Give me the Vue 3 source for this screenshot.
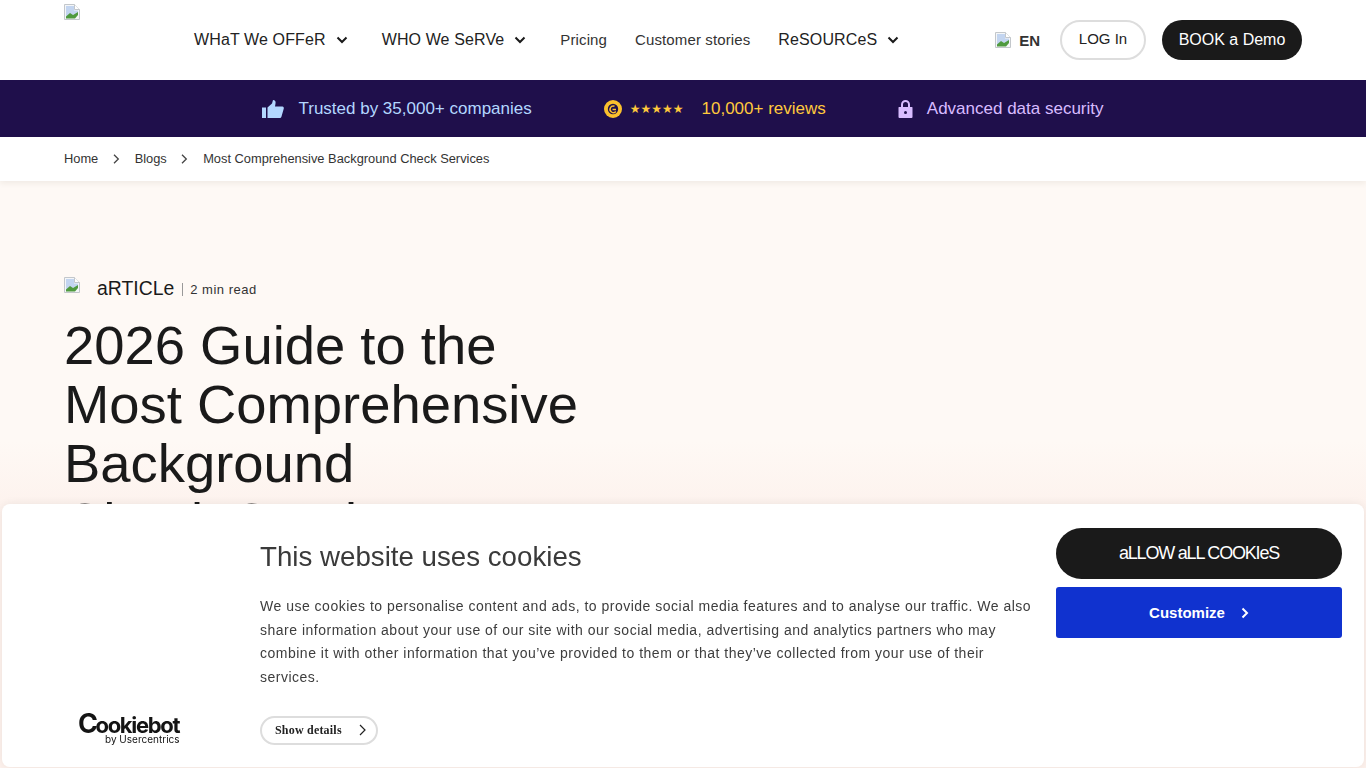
<script setup>
const navItems = [
  { label: 'WHaT We OFFeR', display: true, caret: true },
  { label: 'WHO We SeRVe', display: true, caret: true },
  { label: 'Pricing', display: false, caret: false },
  { label: 'Customer stories', display: false, caret: false },
  { label: 'ReSOURCeS', display: true, caret: true },
]
const crumbs = ['Home', 'Blogs']
</script>

<template>
  <div class="page">
    <header class="topbar">
      <div class="logo">
        <svg class="broken" viewBox="0 0 16 16"><path d="M.5.5h10L15.500 5.500v10H.5z" fill="#f4f6f8" stroke="#c3c7cb"/><path d="M10.500.5v5h5" fill="#fff" stroke="#c3c7cb"/><path d="M2 2h8v4.500h4V9l-5 2-2 3H2z" fill="#c3d5f0"/><path d="M2 14.500v-2L6 9l3 2 5-3v3l-3 3.500z" fill="#4f9a3f"/></svg>
      </div>
      <nav class="nav">
        <a v-for="item in navItems" :key="item.label" class="nav-item" :class="{ display: item.display }">
          <span>{{ item.label }}</span>
          <svg v-if="item.caret" class="caret" viewBox="0 0 12 8"><path d="M1.500 1.500 6 6l4.500-4.500" fill="none" stroke="#1a1a1a" stroke-width="2"/></svg>
        </a>
      </nav>
      <div class="actions">
        <div class="lang">
          <svg class="broken" viewBox="0 0 16 16"><path d="M.5.5h10L15.500 5.500v10H.5z" fill="#f4f6f8" stroke="#c3c7cb"/><path d="M10.500.5v5h5" fill="#fff" stroke="#c3c7cb"/><path d="M2 2h8v4.500h4V9l-5 2-2 3H2z" fill="#c3d5f0"/><path d="M2 14.500v-2L6 9l3 2 5-3v3l-3 3.500z" fill="#4f9a3f"/></svg>
          <span>EN</span>
        </div>
        <a class="btn-login">LOG In</a>
        <a class="btn-demo">BOOK a Demo</a>
      </div>
    </header>

    <section class="trust">
      <div class="trust-item blue">
        <svg class="thumb" viewBox="0 0 22 18"><path d="M0 7.500h4V18H0zM5.500 7.500 10 3.500 11 0c2 0 3 1.500 2.500 3.500L13 6.500h7.500c1 0 1.500 1 1.300 2l-2.300 8c-.3 1-1 1.500-2 1.500H5.500z" fill="#b3d7ff"/></svg>
        <span>Trusted by 35,000+ companies</span>
      </div>
      <div class="trust-item yellow">
        <svg class="g2" viewBox="0 0 18 18"><circle cx="9" cy="9" r="9" fill="#fbc02d"/><circle cx="9" cy="9" r="5.200" fill="#1f0f4b"/><path d="M11.800 11.500A3.300 3.300 0 1 1 10.500 6.200" fill="none" stroke="#fbc02d" stroke-width="1.500"/><path d="M8.500 9.500h3.500" stroke="#fbc02d" stroke-width="1.500"/></svg>
        <span class="stars">★★★★★</span>
        <span>10,000+ reviews</span>
      </div>
      <div class="trust-item purple">
        <svg class="lock" viewBox="0 0 14 18"><path d="M3.500 7V4.500a3.500 3.500 0 0 1 7 0V7" fill="none" stroke="#d8bcff" stroke-width="2"/><path d="M.5 7h13a.5.5 0 0 1 .5.5V17a1 1 0 0 1-1 1H1a1 1 0 0 1-1-1V7.500A.5.5 0 0 1 .5 7z" fill="#d8bcff"/><circle cx="7" cy="12.500" r="1.500" fill="#1f0f4b"/></svg>
        <span>Advanced data security</span>
      </div>
    </section>

    <div class="crumbs">
      <template v-for="c in crumbs" :key="c">
        <span>{{ c }}</span>
        <svg class="crumb-sep" viewBox="0 0 7 10"><path d="M1 .8 5.300 5 1 9.200" fill="none" stroke="#444" stroke-width="1.300"/></svg>
      </template>
      <span>Most Comprehensive Background Check Services</span>
    </div>

    <main class="hero">
      <div class="meta">
        <svg class="broken" viewBox="0 0 16 16"><path d="M.5.5h10L15.500 5.500v10H.5z" fill="#f4f6f8" stroke="#c3c7cb"/><path d="M10.500.5v5h5" fill="#fff" stroke="#c3c7cb"/><path d="M2 2h8v4.500h4V9l-5 2-2 3H2z" fill="#c3d5f0"/><path d="M2 14.500v-2L6 9l3 2 5-3v3l-3 3.500z" fill="#4f9a3f"/></svg>
        <span class="kind">aRTICLe</span>
        <span class="read">2 min read</span>
      </div>
      <h1>2026 Guide to the<br>Most Comprehensive<br>Background<br>Check Services</h1>
    </main>

    <aside class="cookie">
      <div class="brand">
        <div class="cb-word"><span class="cb-c">C</span>ookiebot</div>
        <div class="cb-sub">by Usercentrics</div>
      </div>
      <div class="cookie-body">
        <h2>This website uses cookies</h2>
        <p>We use cookies to personalise content and ads, to provide social media features and to analyse our traffic. We also share information about your use of our site with our social media, advertising and analytics partners who may combine it with other information that you’ve provided to them or that they’ve collected from your use of their services.</p>
        <button class="details">
          <span>Show details</span>
          <svg viewBox="0 0 7 12"><path d="M1 1l5 5-5 5" fill="none" stroke="#222" stroke-width="1.200"/></svg>
        </button>
      </div>
      <div class="cookie-actions">
        <button class="allow">aLLOW aLL COOKIeS</button>
        <button class="customize">
          <span>Customize</span>
          <svg viewBox="0 0 8 12"><path d="M1.500 1.500 6 6l-4.500 4.500" fill="none" stroke="#fff" stroke-width="2"/></svg>
        </button>
      </div>
    </aside>
  </div>
</template>

<style>
html, body { margin: 0; background: #fff; overflow: hidden; }
</style>

<style scoped>
.page { height: 768px; overflow: hidden; font-family: "Liberation Sans", Arial, sans-serif; color: #1a1a1a; }
.broken { width: 16px; height: 16px; flex: none; display: block; }

.topbar { height: 80px; background: #fff; display: flex; padding: 0 64px; box-sizing: border-box; }
.logo { width: 130px; flex: none; padding-top: 4px; }
.nav { display: flex; align-items: center; gap: 28px; flex: 1; }
.nav-item { display: flex; align-items: center; gap: 10px; font-size: 15px; letter-spacing: .12px; color: #333; white-space: nowrap; padding-bottom: 1px; }
.nav-item.display { font-size: 16px; letter-spacing: .12px; color: #222; }
.caret { width: 12px; height: 8px; margin-right: 6px; margin-top: 1px; }
.actions { display: flex; align-items: center; }
.lang { display: flex; align-items: center; gap: 8px; font-weight: 700; font-size: 15px; color: #333; margin-right: 20px; }
.btn-login { width: 86px; height: 40px; box-sizing: border-box; border: 2px solid #ddd; border-radius: 20px; display: flex; align-items: center; justify-content: center; font-size: 15px; color: #222; margin-right: 16px; padding-bottom: 3px; }
.btn-demo { width: 140px; height: 40px; box-sizing: border-box; background: #1a1a1a; border-radius: 20px; color: #fff; display: flex; align-items: center; justify-content: center; font-size: 16px; padding-bottom: 1px; }

.trust { height: 57px; background: #1f0f4b; display: flex; align-items: center; justify-content: center; gap: 72px; font-size: 17px; }
.trust-item { display: flex; align-items: center; white-space: nowrap; }
.blue { color: #b3d7ff; }
.yellow { color: #ffc93c; }
.purple { color: #d8bcff; }
.thumb { width: 22px; height: 18px; margin-right: 14px; }
.g2 { width: 18px; height: 18px; margin-right: 8px; }
.stars { font-size: 12px; margin-right: 18px; font-family: "DejaVu Sans", sans-serif; }
.lock { width: 15px; height: 18px; margin-right: 14px; }

.crumbs { height: 44px; background: #fff; display: flex; align-items: center; padding-left: 64px; font-size: 12.850px; color: #333; box-shadow: 0 2px 6px rgba(60, 50, 30, .08); position: relative; padding-bottom: 2px; box-sizing: border-box; }
.crumb-sep { width: 7px; height: 10px; margin: 2px 14.700px 0; }

.hero { height: 587px; box-sizing: border-box; padding: 96px 64px 0; background: linear-gradient(#fef9f5 0, #fef9f5 260px, #fdf1ec 340px); }
.meta { display: flex; align-items: flex-start; height: 22px; }
.kind { font-size: 19.400px; margin-left: 17px; color: #1a1a1a; }
.read { font-size: 13px; margin: 6px 0 0 8px; padding-left: 7px; border-left: 1px solid #999; line-height: 13px; letter-spacing: .5px; color: #333; }
h1 { margin: 17px 0 0; font-size: 54.400px; line-height: 59px; font-weight: 400; color: #1a1a1a; white-space: nowrap; }

.cookie { position: fixed; left: 2px; right: 2px; bottom: 1px; height: 263px; background: #fff; border-radius: 8px; box-shadow: 0 0 10px rgba(0, 0, 0, .07); display: flex; box-sizing: border-box; padding: 24px 22px 0 0; }
.brand { width: 258px; flex: none; box-sizing: border-box; padding: 186px 0 0 76px; color: #141414; }
.cb-word { font-family: Inter, sans-serif; font-weight: 700; font-size: 22px; line-height: 20px; letter-spacing: -1.300px; height: 20px; }
.cb-c { font-size: 27px; line-height: 20px; letter-spacing: -2.500px; }
.cb-sub { font-family: Inter, sans-serif; font-size: 10px; line-height: 11px; padding-left: 27px; }
.cookie-body { width: 772px; flex: none; }
h2 { margin: 12px 0 0; font-size: 27.700px; line-height: 34px; font-weight: 400; color: #3a3a3a; }
p { margin: 21px 0 0; font-size: 14px; line-height: 23.700px; letter-spacing: .5px; color: #3d3d3d; }
.details { margin-top: 26px; width: 118px; height: 29px; box-sizing: border-box; background: #fff; border: 2px solid #ddd; border-radius: 15px; padding: 0 10px 0 13px; display: flex; align-items: center; justify-content: space-between; font-family: "Liberation Serif", serif; font-weight: 700; font-size: 12px; letter-spacing: .2px; color: #222; }
.details svg { width: 7px; height: 12px; }
.cookie-actions { width: 286px; margin-left: 24px; flex: none; display: flex; flex-direction: column; gap: 8px; }
.allow { height: 51px; border: 0; background: #1a1a1a; color: #fff; border-radius: 26px; font-family: inherit; font-size: 18px; letter-spacing: -1.200px; }
.customize { height: 51px; border: 0; background: #1032cf; color: #fff; border-radius: 3px; font-family: inherit; font-weight: 700; font-size: 15px; display: flex; align-items: center; justify-content: center; gap: 16px; }
.customize svg { width: 8px; height: 12px; }
</style>
